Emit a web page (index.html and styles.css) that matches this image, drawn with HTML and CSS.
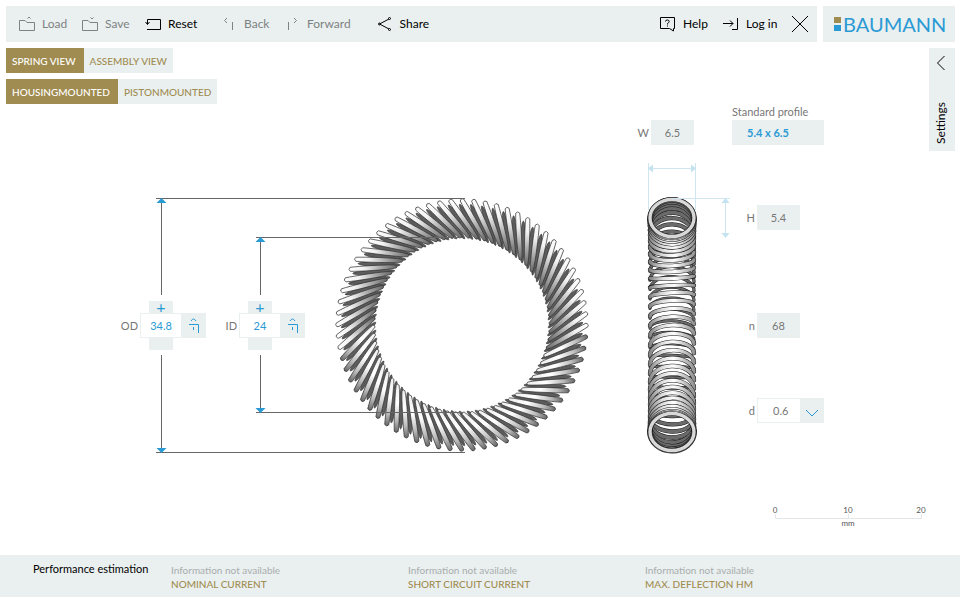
FILE: index.html
```html
<!DOCTYPE html>
<html lang="en">
<head>
<meta charset="utf-8">
<title>Baumann spring configurator</title>
<link rel="stylesheet" href="styles.css">
</head>
<body>
<header class="top">
  <nav class="toolbar" aria-label="Main">
    <div class="group">
      <button class="tool muted"><svg class="icon" viewBox="0 0 16 16"><path d="M.5 14.500V4.500H6L8 6.500H15.500V14.500H.5M8.500 2.500l1.500-1.500 1.500 1.500"/></svg>Load</button>
      <button class="tool muted"><svg class="icon" viewBox="0 0 16 16"><path d="M.5 14.500V4.500H6L8 6.500H15.500V14.500H.5M8.500 1.500l1.500 1.500 1.500-1.500"/></svg>Save</button>
      <button class="tool"><svg class="icon" viewBox="0 0 16 16"><path d="M2.500 8V3.500H15.500V13.500H2M.5 6l2 2.500 2-2.500"/></svg>Reset</button>
    </div>
    <div class="group">
      <button class="tool muted"><svg class="icon" viewBox="0 0 16 16"><path d="M3 2L.5 4.500L3 7M8.500 6V14"/></svg><span class="near">Back</span></button>
      <button class="tool muted"><svg class="icon" viewBox="0 0 16 16"><path d="M7 2L9.500 4.500L7 7M1.500 6V14"/></svg><span class="near">Forward</span></button>
    </div>
    <div class="group">
      <button class="tool"><svg class="icon" viewBox="0 0 16 16"><path d="M12 3L2.500 8L12 13"/><circle cx="12.500" cy="2.500" r="1"/><circle cx="2.500" cy="8" r="1"/><circle cx="12.500" cy="13.500" r="1"/></svg>Share</button>
    </div>
    <div class="group end">
      <button class="tool"><svg class="icon" viewBox="0 0 16 16"><path d="M.5 12.500V1.500H14.500V12.500H13.500V15L9.500 12.500H.5M5.500 5.500Q5.500 4 7.300 4Q9.200 4 9.200 5.500Q9.200 6.500 7.500 7.500V8.500M7.500 9.500V10.500"/></svg>Help</button>
      <button class="tool"><svg class="icon" viewBox="0 0 16 16"><path d="M0 7.500H10M7 4.500l3 3-3 3M14.500 2V13.500H9"/></svg>Log in</button>
      <button class="close" aria-label="Close"><svg viewBox="0 0 18 18"><path d="M1 1L17 17M17 1L1 17"/></svg></button>
    </div>
  </nav>
  <a class="brand" href="#"><span class="mark"></span>BAUMANN</a>
</header>

<main class="stage">
  <div class="views">
    <div class="tabs">
      <button class="tab on">SPRING VIEW</button><button class="tab">ASSEMBLY VIEW</button>
    </div>
    <div class="tabs">
      <button class="tab on">HOUSINGMOUNTED</button><button class="tab">PISTONMOUNTED</button>
    </div>
  </div>
  <button class="settings"><svg viewBox="0 0 10 16"><path d="M8.500 1L1.500 8L8.500 15"/></svg><span>Settings</span></button>

  <div class="board">
    <svg class="drawing" viewBox="0 48 960 507" preserveAspectRatio="xMidYMin meet" role="img" aria-label="Canted coil spring, front and side view">
      <defs>
        <linearGradient id="upper">
          <stop offset="0" stop-color="#666"/><stop offset=".35" stop-color="#aaa"/><stop offset=".7" stop-color="#f2f2f2"/><stop offset="1" stop-color="#fff"/>
        </linearGradient>
        <linearGradient id="lower">
          <stop offset="0" stop-color="#eee"/><stop offset=".4" stop-color="#fff"/><stop offset=".75" stop-color="#bbb"/><stop offset="1" stop-color="#666"/>
        </linearGradient>
        <linearGradient id="wire" gradientUnits="userSpaceOnUse" x1="-24" y1="0" x2="24" y2="0">
          <stop offset="0" stop-color="#777"/><stop offset=".3" stop-color="#ddd"/><stop offset=".55" stop-color="#fff"/><stop offset="1" stop-color="#888"/>
        </linearGradient>
      </defs>
      <g id="ring"></g>
      <g id="side"></g>
      <path class="dim" d="M156 198.500H465M156 452.500H465M161.500 199V295M161.500 355V452M256 237.500H462M256 412.500H462M260.500 238V295M260.500 355V412"/>
      <path class="tip" d="M161.500 198l5 5h-10zM161.500 453l5-5h-10zM260.500 237l5 5h-10zM260.500 413l5-5h-10z"/>
      <path class="pale" d="M648.500 163V210M695.500 163V210M649 168.500H695M672 198.500H730M725.500 199V237"/>
      <path class="paletip" d="M648 168.500l5-4v8zM696 168.500l-5-4v8zM725.500 198l4 5h-8zM725.500 238l4-5h-8z"/>
      <path class="rule" d="M775.500 514V518.500H921.500V514M848.500 514V518"/>
      <g class="ticks"><text x="775" y="513">0</text><text x="848" y="513">10</text><text x="921" y="513">20</text><text x="848" y="526">mm</text></g>
    </svg>

    <div class="pin od stepper">
      <label for="od">OD</label>
      <button class="plus" aria-label="Increase OD">+</button>
      <input id="od" value="34.8">
      <button class="lock" aria-label="Lock OD"><svg viewBox="0 0 12 16"><path d="M3 3Q5.500-1 8 3M1 6.500H10.500V15M5.500 9V12"/></svg></button>
      <button class="minus" aria-label="Decrease OD"></button>
    </div>
    <div class="pin id stepper">
      <label for="idia">ID</label>
      <button class="plus" aria-label="Increase ID">+</button>
      <input id="idia" value="24">
      <button class="lock" aria-label="Lock ID"><svg viewBox="0 0 12 16"><path d="M3 3Q5.500-1 8 3M1 6.500H10.500V15M5.500 9V12"/></svg></button>
      <button class="minus" aria-label="Decrease ID"></button>
    </div>
    <div class="pin w value"><label for="w">W</label><input id="w" value="6.5" readonly></div>
    <div class="pin profile"><label for="profile">Standard profile</label><select id="profile"><option>5.4 x 6.5</option></select></div>
    <div class="pin h value"><label for="h">H</label><input id="h" value="5.4" readonly></div>
    <div class="pin n value"><label for="n">n</label><input id="n" value="68" readonly></div>
    <div class="pin d value"><label for="d">d</label><span class="pick"><select id="d"><option>0.6</option></select><svg viewBox="0 0 14 8"><path d="M1 1L7 7L13 1"/></svg></span></div>
  </div>
</main>

<footer class="bottom">
  <h2>Performance estimation</h2>
  <dl><dt>Information not available</dt><dd>NOMINAL CURRENT</dd></dl>
  <dl><dt>Information not available</dt><dd>SHORT CIRCUIT CURRENT</dd></dl>
  <dl><dt>Information not available</dt><dd>MAX. DEFLECTION HM</dd></dl>
</footer>
<script src="spring.js"></script>
</body>
</html>
```
FILE: styles.css
```css
* { box-sizing: border-box; }
body {
  margin: 0;
  min-height: 100vh;
  display: flex;
  flex-direction: column;
  background: #fff;
  color: #000;
  font: 12px/16px Lato, "Liberation Sans", sans-serif;
}
button, input, select {
  font: inherit;
  color: inherit;
  border: 0;
  border-radius: 0;
  margin: 0;
  padding: 0;
  background: none;
}
svg { fill: none; stroke: currentColor; }

.top { display: flex; gap: 6px; padding: 6px 5px 6px 6px; }
.toolbar {
  flex: 1;
  display: flex;
  align-items: center;
  height: 36px;
  padding: 0 8px 0 13px;
  background: #eaf0f0;
}
.group { display: flex; align-items: center; margin-right: 16px; }
.group:nth-child(2) { margin-right: 26px; }
.end { margin: 0 0 0 auto; }
.tool { display: flex; align-items: center; gap: 7px; min-width: 63px; white-space: nowrap; }
.near { margin-left: -3px; }
.icon { width: 16px; height: 16px; flex: none; }
.muted { color: #7d8282; }
.close { margin-left: 5px; width: 18px; height: 18px; }
.close svg { display: block; width: 18px; height: 18px; }
.brand {
  width: 132px;
  height: 36px;
  display: flex;
  align-items: center;
  gap: 2px;
  padding-left: 11px;
  background: #eaf0f0;
  color: #2a9ad4;
  font-size: 20px;
  text-decoration: none;
}
.mark {
  width: 7px;
  height: 14px;
  border-top: 6px solid #a08c50;
  background: linear-gradient(#eaf0f0 2px, #2a9ad4 2px);
}

.stage {
  flex: 1;
  display: grid;
  grid-template-columns: 1fr auto;
}
.views { grid-area: 1 / 1; padding-left: 6px; z-index: 1; justify-self: start; align-self: start; }
.tabs { display: flex; margin-bottom: 6px; }
.tab { height: 25px; padding: 0 6px; background: #eaf0f0; color: #a08c50; font-size: 10px; font-weight: 500; }
.tab.on { padding-right: 8px; background: #a08c50; color: #fff; }
.settings {
  grid-area: 1 / 2;
  align-self: start;
  z-index: 1;
  width: 26px;
  height: 103px;
  margin-right: 5px;
  padding: 7px 2px 7px 0;
  display: flex;
  flex-direction: column;
  align-items: center;
  justify-content: space-between;
  background: #eaf0f0;
}
.settings svg { width: 10px; height: 16px; }
.settings span { writing-mode: vertical-rl; transform: rotate(180deg); }

.board { grid-area: 1 / 1 / 2 / 3; position: relative; color: #777; font-size: 11px; }
.drawing { display: block; width: 100%; height: 507px; }
.dim { stroke: #666; }
.tip { fill: #2a9ad4; stroke: none; }
.pale { stroke: #cfe5ef; }
.paletip { fill: #c4e2f0; stroke: none; }
.rule { stroke: #e2e6e6; }
.ticks { fill: #555; stroke: none; font-size: 8px; text-anchor: middle; }

.pin { position: absolute; }
.od { left: calc(50% - 360px); top: 253px; }
.id { left: calc(50% - 261px); top: 253px; }
.w { left: calc(50% + 151px); top: 72px; }
.h { left: calc(50% + 257px); top: 157px; }
.n { left: calc(50% + 257px); top: 265px; }
.d { left: calc(50% + 257px); top: 350px; }
.profile { left: calc(50% + 252px); top: 56px; }

.stepper {
  display: grid;
  grid-template: 12px 25px 12px / 20px 42px 24px;
  align-items: stretch;
}
.stepper label { grid-area: 2 / 1; align-self: center; padding-right: 2px; text-align: right; }
.stepper input {
  grid-area: 2 / 2;
  width: 100%;
  border: 1px solid #eaf0f0;
  text-align: center;
  color: #2a9ad4;
}
.plus, .minus, .lock { background: #eaf0f0; color: #2a9ad4; }
.plus, .minus { width: 24px; justify-self: center; }
.plus { grid-area: 1 / 2; font-size: 16px; line-height: 12px; }
.minus { grid-area: 3 / 2; }
.lock { grid-area: 2 / 3; display: grid; place-items: center; }
.lock svg { width: 12px; height: 16px; }

.value { display: flex; align-items: center; }
.value label { width: 20px; padding-right: 2px; text-align: right; }
.value input { width: 43px; height: 25px; background: #eaf0f0; text-align: center; }
.pick { position: relative; display: flex; background: linear-gradient(90deg, #fff 43px, #eaf0f0 43px); }
.pick select, .profile select { appearance: none; height: 25px; }
.pick select { width: 67px; padding-left: 15px; border: 1px solid #eaf0f0; }
.pick svg { position: absolute; right: 5px; top: 11px; width: 14px; height: 8px; color: #2a9ad4; pointer-events: none; }
.profile label { display: block; }
.profile select { display: block; width: 92px; padding-left: 15px; background: #eaf0f0; color: #2a9ad4; font-weight: 700; }

.bottom {
  display: grid;
  grid-template-columns: 138px repeat(3, 1fr);
  min-height: 42px;
  padding: 6px 78px 4px 33px;
  background: #eaf0f0;
}
.bottom h2 { margin: 0; font: inherit; font-size: 11px; white-space: nowrap; }
.bottom dl, .bottom dd { margin: 0; }
.bottom dl { line-height: 14px; padding-top: 2px; font-size: 10px; }
.bottom dt { color: #a9adad; }
.bottom dd { color: #a08c50; font-weight: 500; }
```
FILE: spring.js
```js
const NS = 'http://www.w3.org/2000/svg';
const COILS = 68;

function add(parent, tag, attributes) {
  const node = document.createElementNS(NS, tag);
  for (const name in attributes) node.setAttribute(name, attributes[name]);
  parent.appendChild(node);
}

// Front view: dark rear strands first, light front strands over them.
// Each strand leans 30 degrees off the radius, its outer end to the right.
const ring = document.getElementById('ring');
for (let i = 0; i < COILS; i++) {
  add(ring, 'ellipse', {
    rx: 21, ry: 2.4, fill: '#5c5c5c', stroke: '#333', 'stroke-width': 0.6,
    transform: `translate(462 325) rotate(${(i * 360) / COILS}) translate(102.500 8) rotate(-30)`
  });
}
const OUTLINE = 'M-23 -1.500C-14 -2.800 14 -2.800 23 -2Q25.500 0 23 2C14 2.600 -14 2.600 -23 1.500Q-25 0 -23 -1.500Z';
for (let i = 0; i < COILS; i++) {
  const turn = (i * 360) / COILS;
  add(ring, 'path', {
    d: OUTLINE, stroke: '#333', 'stroke-width': 0.7,
    fill: turn > 5 && turn < 165 ? 'url(#lower)' : 'url(#upper)',
    transform: `translate(462 325) rotate(${turn}) translate(105 11.500) rotate(-30)`
  });
}

// Half a coil seen edge-on: positive bulge arches up, negative sags down.
function half(parent, place, bulge, color, width) {
  const d = `M-22 0A22 ${Math.abs(bulge)} 0 0 ${bulge > 0 ? 1 : 0} 22 0`;
  const shared = { d, transform: place, 'stroke-linecap': 'round' };
  add(parent, 'path', { ...shared, stroke: '#1c1c1c', 'stroke-width': width + 1 });
  add(parent, 'path', { ...shared, stroke: color, 'stroke-width': width });
}

// Side view: coils of the rear half, from the farthest to the section plane.
const side = document.getElementById('side');
for (let i = COILS / 4; i > 0; i--) {
  const angle = (i * 2 * Math.PI) / COILS;
  for (const end of i === COILS / 4 ? [1] : [-1, 1]) {
    const reach = Math.sin(angle);
    const phi = end * (Math.PI / 2 - angle);
    const y = 325 + 107 * Math.sin(phi);
    const near = 19 * Math.sin(phi + 0.45 * reach);
    const far = -19 * Math.sin(phi - 0.45 * reach);
    half(side, `translate(672 ${y + 4 * reach}) rotate(${2 * reach})`, far, '#6a6a6a', 5 - 3 * reach);
    half(side, `translate(672 ${y}) rotate(${-3 * reach})`, near, 'url(#wire)', 3.4);
  }
}
for (const y of [218, 432]) {
  add(side, 'ellipse', { cx: 672, cy: y, rx: 22, ry: 18.5, stroke: '#1c1c1c', 'stroke-width': 4.6 });
  add(side, 'ellipse', { cx: 672, cy: y, rx: 22, ry: 18.5, stroke: '#d8d8d8', 'stroke-width': 3.4 });
}
```
